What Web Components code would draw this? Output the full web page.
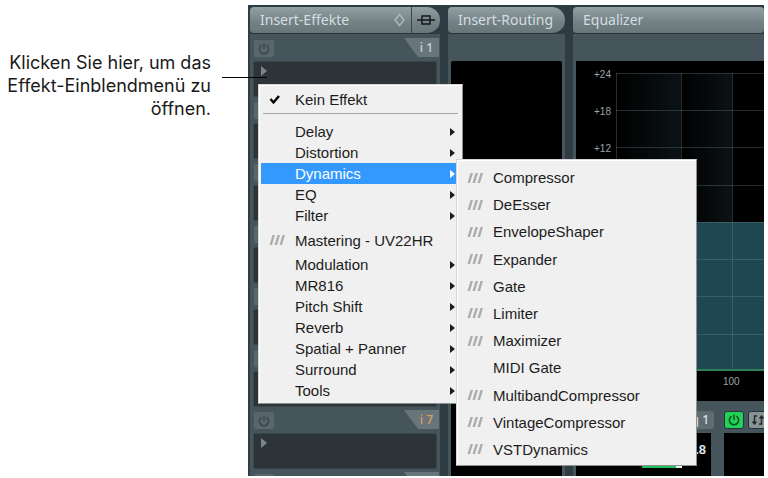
<!DOCTYPE html>
<html lang="de">
<head>
<meta charset="utf-8">
<title>Insert-Effekte</title>
<style>
    body {
        margin: 0;
        background: #fff;
        font-family: "Liberation Sans", Arial, sans-serif;
    }
</style>
</head>
<body>
<effect-page></effect-page>

<script>
class BaseElement extends HTMLElement {
    execShadowContent(content) {
        const shadowRoot = this.attachShadow({ mode: 'open' });
        shadowRoot.innerHTML = content;
        this.shadow = shadowRoot;
    }
}

// -- power symbol, coloured by currentColor
class PowerIcon extends BaseElement {
    static #TEMPLATE = `
<style>
    :host { display: block; width: 12px; height: 12px; }
    svg { display: block; }
</style>
<svg width="12" height="12" viewBox="0 0 12 12" fill="none" stroke="currentColor" stroke-width="1.6">
    <path d="M3.6 2.2A4.6 4.6 0 1 0 8.4 2.2M6 0.5V6"/>
</svg>
    `;

    constructor() {
        super();
        this.execShadowContent(PowerIcon.#TEMPLATE);
    }
}

class SectionHeader extends BaseElement {
    static #TEMPLATE = `
<style>
    :host {
        display: flex;
        box-sizing: border-box;
        height: 27px;
        overflow: hidden;
        border-radius: 4px;
        border-bottom: 1px solid #27343a;
        background: linear-gradient(#93a0a3, #738084 60%, #69777b);
        color: #d3dee2;
        font: 14px "Noto Sans", sans-serif;
    }
    :host([round]) { border-radius: 4px 13px 13px 4px; }
    .title {
        flex: 1;
        padding-left: 10px;
        line-height: 25px;
        white-space: nowrap;
    }
</style>
<span class="title"><slot></slot></span>
<slot name="tools"></slot>
    `;

    constructor() {
        super();
        this.execShadowContent(SectionHeader.#TEMPLATE);
    }
}

class InsertSlot extends BaseElement {
    static #TEMPLATE = `
<style>
    :host { display: block; height: 62px; }
    .bar {
        display: flex;
        justify-content: space-between;
        height: 19px;
        margin: 0 1px 4px 4px;
    }
    button { border: 0; padding: 0; }
    .power {
        display: grid;
        place-items: center;
        width: 20px;
        height: 17px;
        margin-top: 2px;
        border-radius: 2px;
        background: #59676d;
        color: #3c484d;
    }
    .tab {
        width: 35px;
        box-sizing: border-box;
        padding-right: 6px;
        background: #68757a;
        clip-path: polygon(0 0, 100% 0, 100% 100%, 14px 100%);
        color: var(--tab-color, #c5d0d4);
        font: 600 12px/20px "Open Sans", sans-serif;
        text-align: right;
    }
    .slot {
        display: flex;
        align-items: flex-start;
        width: calc(100% - 6px);
        height: 36px;
        margin-left: 3px;
        padding: 4px 0 0 7px;
        border: 1px solid #3a464c;
        border-radius: 2px;
        background: #2d3438;
    }
</style>
<div class="bar">
    <button class="power" aria-label="Ein/Aus"><power-icon></power-icon></button>
    <span class="tab"><slot></slot></span>
</div>
<button class="slot" aria-label="Effekt auswählen">
    <svg width="6" height="10" viewBox="0 0 6 10"><path d="M0 0L6 5L0 10Z" fill="#7b868a"/></svg>
</button>
    `;

    constructor() {
        super();
        this.execShadowContent(InsertSlot.#TEMPLATE);
    }
}

class InsertColumn extends BaseElement {
    static #TEMPLATE = `
<style>
    :host { display: block; overflow: hidden; background: #46545b; }
    .header { background: #2f3c43; margin-bottom: 4px; }
    button {
        display: grid;
        place-items: center;
        padding: 0;
        border: 0;
        background: none;
    }
    .preset { width: 24px; }
    .bypass { width: 29px; border-left: 1px solid #39464b; }
</style>
<div class="header">
    <section-header round>Insert-Effekte
        <button slot="tools" class="preset" aria-label="Presets">
            <svg width="11" height="14" viewBox="0 0 11 14" fill="none" stroke="#a9b5b9" stroke-width="1.6"><path d="M5.5 1.5L10 7L5.5 12.5L1 7Z"/></svg>
        </button>
        <button slot="tools" class="bypass" aria-label="Bypass">
            <svg width="18" height="10" viewBox="0 0 18 10" fill="none" stroke="#15191b" stroke-width="1.5"><path d="M0 5H18M5 1H13V9H5Z"/></svg>
        </button>
    </section-header>
</div>
<insert-slot>i 1</insert-slot>
<insert-slot></insert-slot>
<insert-slot></insert-slot>
<insert-slot></insert-slot>
<insert-slot></insert-slot>
<insert-slot></insert-slot>
<insert-slot style="--tab-color: #dd9a5c">i 7</insert-slot>
<insert-slot></insert-slot>
    `;

    constructor() {
        super();
        this.execShadowContent(InsertColumn.#TEMPLATE);
    }
}

class RoutingColumn extends BaseElement {
    static #TEMPLATE = `
<style>
    :host { display: flex; flex-direction: column; background: #46545b; }
    .header { background: #2f3c43; }
    .screen { flex: 1; margin: 27px 3px 0; border-radius: 2px 2px 0 0; background: #000; }
</style>
<div class="header"><section-header round>Insert-Routing</section-header></div>
<div class="screen"></div>
    `;

    constructor() {
        super();
        this.execShadowContent(RoutingColumn.#TEMPLATE);
    }
}

// -- filter curve display with its gain scale
class EqGraph extends BaseElement {
    static #TEMPLATE = `
<style>
    :host {
        display: grid;
        grid-template-columns: 40px 1fr;
        grid-template-rows: 12px 298px 30px;
        overflow: hidden;
        background: #000;
        color: #9aa3a5;
        font: 10px/12px "Liberation Sans", sans-serif;
    }
    .scale {
        grid-row: 2;
        display: flex;
        flex-direction: column;
        gap: 25px;
        margin: -4px 5px 0 0;
        text-align: right;
    }
    .plot { grid-area: 2 / 2; }
    .freq { grid-area: 3 / 2; padding: 5px 0 0 107px; }
    svg { display: block; width: 100%; height: 298px; }
</style>
<div class="scale"><span>+24</span><span>+18</span><span>+12</span></div>
<div class="plot">
    <svg viewBox="0 0 148 298" preserveAspectRatio="xMinYMin slice">
        <defs>
            <linearGradient id="shade">
                <stop offset="0" stop-color="#000"/>
                <stop offset="1" stop-color="#0b1216"/>
            </linearGradient>
        </defs>
        <rect width="65" height="149" fill="url(#shade)"/>
        <rect x="65" width="51" height="149" fill="url(#shade)"/>
        <rect y="149" width="148" height="149" fill="#1e4752"/>
        <path d="M0.5 0V298M65.5 0V298M116.5 0V298M0 0.5H148M0 37.5H148M0 74.5H148M0 112.5H148M0 149.5H148M0 186.5H148M0 223.5H148M0 261.5H148" stroke="#7d9293" stroke-opacity=".3"/>
        <path d="M0 297H148" stroke="#2d8058" stroke-width="2"/>
    </svg>
</div>
<div class="freq">100</div>
    `;

    constructor() {
        super();
        this.execShadowContent(EqGraph.#TEMPLATE);
    }
}

class EqBand extends BaseElement {
    static #TEMPLATE = `
<style>
    :host { display: flex; flex-direction: column; gap: 4px; }
    .bar { display: flex; gap: 4px; height: 18px; }
    .screen {
        flex: 1;
        padding: 9px 5px 0 0;
        background: #000;
        color: #dfe5e6;
        font: bold 13px/16px "Liberation Sans", sans-serif;
        text-align: right;
    }
    .level { height: 4px; width: 40px; margin: 6px 24px 0 auto; background: linear-gradient(90deg, #20c25a 34px, #e8f5e8 34px); }
</style>
<div class="bar"><slot name="bar"></slot></div>
<div class="screen"><slot></slot></div>
    `;

    constructor() {
        super();
        this.execShadowContent(EqBand.#TEMPLATE);
        if (this.hasAttribute('level')) {
            const level = document.createElement('div');
            level.classList.add('level');
            this.shadow.querySelector('.screen').appendChild(level);
        }
    }
}

class EqualizerColumn extends BaseElement {
    static #TEMPLATE = `
<style>
    :host { display: flex; flex-direction: column; overflow: hidden; background: #46545b; }
    .header { background: #2f3c43; }
    eq-graph { margin: 27px 0 10px 3px; }
    .bands {
        flex: 1;
        display: grid;
        grid-template-columns: 135px 1fr;
        gap: 13px;
        margin-left: 3px;
    }
    .name {
        flex: 1;
        margin-right: -3px;
        padding-right: 5px;
        border-radius: 3px;
        background: #5f6c72;
        color: #d5dee1;
        font: 600 12px/18px "Open Sans", sans-serif;
        text-align: right;
    }
    button {
        flex: none;
        display: grid;
        place-items: center;
        width: 20px;
        height: 18px;
        padding: 0;
        border: 1px solid #27343a;
        border-radius: 3px;
        background: #8b9294;
    }
    .on { background: #22d257; color: #0c5425; }
</style>
<div class="header"><section-header>Equalizer</section-header></div>
<eq-graph></eq-graph>
<div class="bands">
    <eq-band level><span slot="bar" class="name">eq 1</span>0.8</eq-band>
    <eq-band>
        <button slot="bar" class="on" aria-label="Band ein"><power-icon></power-icon></button>
        <button slot="bar" aria-label="Invertieren">
            <svg width="14" height="12" viewBox="0 0 14 12" fill="none" stroke="#20272a" stroke-width="1.4"><path d="M6 2H3.5V10M1.5 7.5L3.5 10L5.5 7.5M8 10H10.5V2M8.5 4.5L10.5 2L12.5 4.5"/></svg>
        </button>
    </eq-band>
</div>
    `;

    constructor() {
        super();
        this.execShadowContent(EqualizerColumn.#TEMPLATE);
    }
}

class PopupMenu extends BaseElement {
    static #TEMPLATE = `
<style>
    :host {
        display: grid;
        box-sizing: border-box;
        padding: 4px 2px 2px;
        border: 1px solid #8d8f90;
        border-color: #d5d6d6 #8d8f90 #8d8f90 #d5d6d6;
        background: #f0f0f0;
        box-shadow: inset 1px 1px #fff;
    }
    ::slotted(hr) {
        margin: 3px 2px 7px;
        border: 0;
        border-top: 1px solid #a5a5a5;
    }
</style>
<slot></slot>
    `;

    constructor() {
        super();
        this.execShadowContent(PopupMenu.#TEMPLATE);
    }

    connectedCallback() {
        this.setAttribute('role', 'menu');
    }
}

class MenuEntry extends BaseElement {
    static #TEMPLATE = `
<style>
    :host { display: block; }
    button {
        display: grid;
        grid-template-columns: 34px 1fr 10px;
        align-items: center;
        width: 100%;
        height: var(--entry-height, 21px);
        padding: 0;
        border: 0;
        background: none;
        color: #1c1c1c;
        font: 15px "Liberation Sans", Arial, sans-serif;
        text-align: left;
        white-space: nowrap;
    }
    :host([tall]) button { height: 28px; }
    :host([active]) button { background: #3399ff; color: #fff; }
    svg { display: none; }
    .icon { padding-left: 8px; }
    :host([checked]) .check,
    :host([plugin]) .plugin,
    :host([more]) .more { display: block; }
</style>
<button role="menuitem">
    <span class="icon">
        <svg class="check" width="12" height="11" viewBox="0 0 12 11" fill="none" stroke="#000" stroke-width="2.4"><path d="M1.5 5L4.5 8.5L10 2"/></svg>
        <svg class="plugin" width="17" height="10" viewBox="0 0 17 10" fill="#adadad"><path d="M0.5 10L3.5 0H6L3 10ZM5.5 10L8.5 0H11L8 10ZM10.5 10L13.5 0H16L13 10Z"/></svg>
    </span>
    <slot></slot>
    <svg class="more" width="5" height="8" viewBox="0 0 5 8"><path d="M0 0L5 4L0 8Z" fill="currentColor"/></svg>
</button>
    `;

    constructor() {
        super();
        this.execShadowContent(MenuEntry.#TEMPLATE);
    }
}

class EffectPage extends BaseElement {
    static #TEMPLATE = `
<style>
    :host {
        display: grid;
        grid-template-columns: 211px 1fr;
        gap: 37px;
        padding: 5px 4px 2px 0;
    }
    .note {
        margin: 0;
        padding-top: 46px;
        color: #1a1a1a;
        font: 18px/23px Inter, "Liberation Sans", Arial, sans-serif;
        text-align: right;
    }
    .mixer {
        position: relative;
        display: grid;
        grid-template-columns: 190px 117px 1fr;
        gap: 8px;
        height: 471px;
        box-sizing: border-box;
        overflow: hidden;
        padding: 2px 0 0 2px;
        background: #2f3c43;
    }
    .leader {
        position: absolute;
        left: 222px;
        top: 77px;
        width: 45px;
        height: 1px;
        background: #000;
    }
    popup-menu { position: absolute; }
    .effects { left: 10px; top: 79px; width: 205px; }
    .dynamics { left: 208px; top: 154px; width: 241px; height: 307px; --entry-height: 100%; }
</style>
<p class="note">Klicken Sie hier, um das Effekt-Einblendmenü zu öffnen.</p>
<div class="mixer">
    <insert-column></insert-column>
    <routing-column></routing-column>
    <equalizer-column></equalizer-column>
    <popup-menu class="effects">
        <menu-entry checked>Kein Effekt</menu-entry>
        <hr>
        <menu-entry more>Delay</menu-entry>
        <menu-entry more>Distortion</menu-entry>
        <menu-entry more active>Dynamics</menu-entry>
        <menu-entry more>EQ</menu-entry>
        <menu-entry more>Filter</menu-entry>
        <menu-entry plugin tall>Mastering - UV22HR</menu-entry>
        <menu-entry more>Modulation</menu-entry>
        <menu-entry more>MR816</menu-entry>
        <menu-entry more>Pitch Shift</menu-entry>
        <menu-entry more>Reverb</menu-entry>
        <menu-entry more>Spatial + Panner</menu-entry>
        <menu-entry more>Surround</menu-entry>
        <menu-entry more>Tools</menu-entry>
    </popup-menu>
    <popup-menu class="dynamics">
        <menu-entry plugin>Compressor</menu-entry>
        <menu-entry plugin>DeEsser</menu-entry>
        <menu-entry plugin>EnvelopeShaper</menu-entry>
        <menu-entry plugin>Expander</menu-entry>
        <menu-entry plugin>Gate</menu-entry>
        <menu-entry plugin>Limiter</menu-entry>
        <menu-entry plugin>Maximizer</menu-entry>
        <menu-entry>MIDI Gate</menu-entry>
        <menu-entry plugin>MultibandCompressor</menu-entry>
        <menu-entry plugin>VintageCompressor</menu-entry>
        <menu-entry plugin>VSTDynamics</menu-entry>
    </popup-menu>
</div>
<div class="leader"></div>
    `;

    constructor() {
        super();
        this.execShadowContent(EffectPage.#TEMPLATE);
    }
}

customElements.define('power-icon', PowerIcon);
customElements.define('section-header', SectionHeader);
customElements.define('insert-slot', InsertSlot);
customElements.define('insert-column', InsertColumn);
customElements.define('routing-column', RoutingColumn);
customElements.define('eq-graph', EqGraph);
customElements.define('eq-band', EqBand);
customElements.define('equalizer-column', EqualizerColumn);
customElements.define('popup-menu', PopupMenu);
customElements.define('menu-entry', MenuEntry);
customElements.define('effect-page', EffectPage);
</script>
</body>
</html>
